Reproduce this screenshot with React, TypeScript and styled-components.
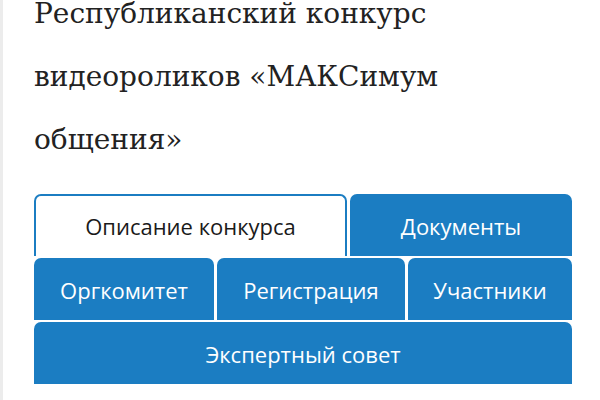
import React, { useState } from "react";
import styled, { createGlobalStyle } from "styled-components";

const GlobalStyle = createGlobalStyle`
  html, body {
    margin: 0;
    padding: 0;
    background: #ffffff;
  }
`;

const Page = styled.div`
  width: 600px;
  height: 400px;
  box-sizing: border-box;
  border-left: 3px solid #ececec;
  padding: 0 28px 0 31px;
  overflow: hidden;
`;

const Title = styled.h1`
  margin: -18px 0 0;
  font-family: "DejaVu Serif", "Liberation Serif", serif;
  font-weight: normal;
  font-size: 28px;
  line-height: 63px;
  color: #222222;
`;

const Tabs = styled.div`
  display: flex;
  flex-wrap: wrap;
  gap: 2px 3px;
  margin-top: 23px;
  width: 538px;
`;

const Tab = styled.button<{ $basis: number; $active?: boolean }>`
  flex: 1 1 ${(p) => p.$basis}px;
  box-sizing: border-box;
  height: 62px;
  border: 2px solid #1b7dc2;
  border-bottom: none;
  border-radius: 7px 7px 0 0;
  background: ${(p) => (p.$active ? "#ffffff" : "#1b7dc2")};
  color: ${(p) => (p.$active ? "#1a1a1a" : "#ffffff")};
  font-family: "Open Sans", "DejaVu Sans", sans-serif;
  font-size: 22px;
  padding: 0;
  cursor: pointer;
`;

const tabs = [
  { label: "Описание конкурса", basis: 313 },
  { label: "Документы", basis: 222 },
  { label: "Оргкомитет", basis: 180 },
  { label: "Регистрация", basis: 188 },
  { label: "Участники", basis: 164 },
  { label: "Экспертный совет", basis: 538 },
];

export default function App() {
  const [active, setActive] = useState(0);
  return (
    <Page>
      <GlobalStyle />
      <Title>Республиканский конкурс видеороликов «МАКСимум общения»</Title>
      <Tabs>
        {tabs.map((t, i) => (
          <Tab key={t.label} $basis={t.basis} $active={i === active} onClick={() => setActive(i)}>
            {t.label}
          </Tab>
        ))}
      </Tabs>
    </Page>
  );
}
